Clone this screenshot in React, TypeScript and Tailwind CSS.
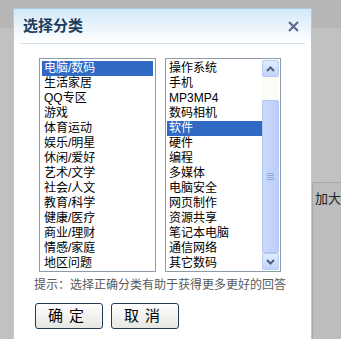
import React from "react";

const leftItems = [
  "电脑/数码",
  "生活家居",
  "QQ专区",
  "游戏",
  "体育运动",
  "娱乐/明星",
  "休闲/爱好",
  "艺术/文学",
  "社会/人文",
  "教育/科学",
  "健康/医疗",
  "商业/理财",
  "情感/家庭",
  "地区问题",
];

const rightItems = [
  "操作系统",
  "手机",
  "MP3MP4",
  "数码相机",
  "软件",
  "硬件",
  "编程",
  "多媒体",
  "电脑安全",
  "网页制作",
  "资源共享",
  "笔记本电脑",
  "通信网络",
  "其它数码",
];

const font = { fontFamily: '"Liberation Sans", "Noto Sans CJK SC", sans-serif' };

function ListItem({ label, selected }: { label: string; selected: boolean }) {
  return (
    <div
      className={
        "h-[15px] pl-[2px] text-[12px] leading-[15px] whitespace-nowrap " +
        (selected ? "bg-[#316ac5] text-white" : "text-black")
      }
    >
      {label}
    </div>
  );
}

function ScrollButton({ up }: { up: boolean }) {
  return (
    <div className="flex h-[17px] w-[17px] items-center justify-center rounded-[2px] border border-[#b8cbf2] bg-gradient-to-b from-[#e4ecfd] to-[#c3d4fa]">
      <svg width="9" height="6" viewBox="0 0 9 6">
        <path
          d={up ? "M1 5 L4.5 1.5 L8 5" : "M1 1 L4.5 4.5 L8 1"}
          fill="none"
          stroke="#4d6185"
          strokeWidth="2"
        />
      </svg>
    </div>
  );
}

function Scrollbar() {
  return (
    <div className="flex w-[17px] flex-col bg-[#fbfbf8]">
      <ScrollButton up />
      <div className="h-[23px]" />
      <div className="flex flex-1 items-center justify-center rounded-[2px] border border-[#b1c5f3] bg-gradient-to-r from-[#cbdafc] to-[#bccffa]">
        <div className="flex flex-col gap-[1px]">
          <div className="h-[1px] w-[7px] bg-[#8fa8e4]" />
          <div className="h-[1px] w-[7px] bg-[#8fa8e4]" />
          <div className="h-[1px] w-[7px] bg-[#8fa8e4]" />
          <div className="h-[1px] w-[7px] bg-[#8fa8e4]" />
        </div>
      </div>
      <ScrollButton up={false} />
    </div>
  );
}

export default function App() {
  return (
    <div className="relative h-[339px] w-[341px] overflow-hidden bg-[#c1c1c1]" style={font}>
      {/* page behind the overlay */}
      <div className="h-[28px] bg-[#b6b6b6]" />
      <div className="mt-[154px] ml-[312px] h-[157px] border-t border-l border-[#a9a9a9] bg-[#bdbdbd] pt-[6px] pl-[2px] text-[13px] text-[#222]">
        加大
      </div>

      {/* dialog */}
      <div className="absolute left-[13px] top-[8px] h-[340px] w-[299px] border border-[#a9cde0] bg-white">
        <div className="flex h-[34px] items-center justify-between bg-gradient-to-b from-[#d3e8f8] to-white pl-[9px] pr-[12px]">
          <span className="text-[15px] font-bold text-[#1d3d5c]">选择分类</span>
          <svg width="11" height="11" viewBox="0 0 11 11">
            <path d="M1 1 L10 10 M10 1 L1 10" stroke="#5b6a90" strokeWidth="2.2" />
          </svg>
        </div>
        <div className="mx-[6px] h-[1px] bg-[#d6e3ec]" />

        <div className="mt-[14px] flex gap-[9px] pl-[25px]">
          <div className="h-[214px] w-[117px] border border-[#8e9ca9] p-[2px]">
            {leftItems.map((item, i) => (
              <ListItem key={item} label={item} selected={i === 0} />
            ))}
          </div>
          <div className="flex h-[214px] w-[116px] border border-[#8e9ca9] p-[1px]">
            <div className="flex-1 pt-[1px]">
              {rightItems.map((item, i) => (
                <ListItem key={item} label={item} selected={i === 4} />
              ))}
            </div>
            <Scrollbar />
          </div>
        </div>

        <div className="mt-[5px] pl-[20px] text-[12px] leading-[16px] text-[#5a5a5a]">
          提示：选择正确分类有助于获得更多更好的回答
        </div>

        <div className="mt-[10px] flex gap-[8px] pl-[21px]">
          <button className="h-[26px] w-[68px] rounded-[3px] border border-[#1e3b58] bg-gradient-to-b from-white to-[#e6e6e2] text-[15px] tracking-[6px] text-black">
            确定
          </button>
          <button className="h-[26px] w-[68px] rounded-[3px] border border-[#1e3b58] bg-gradient-to-b from-white to-[#e6e6e2] text-[15px] tracking-[6px] text-black">
            取消
          </button>
        </div>
      </div>
    </div>
  );
}
